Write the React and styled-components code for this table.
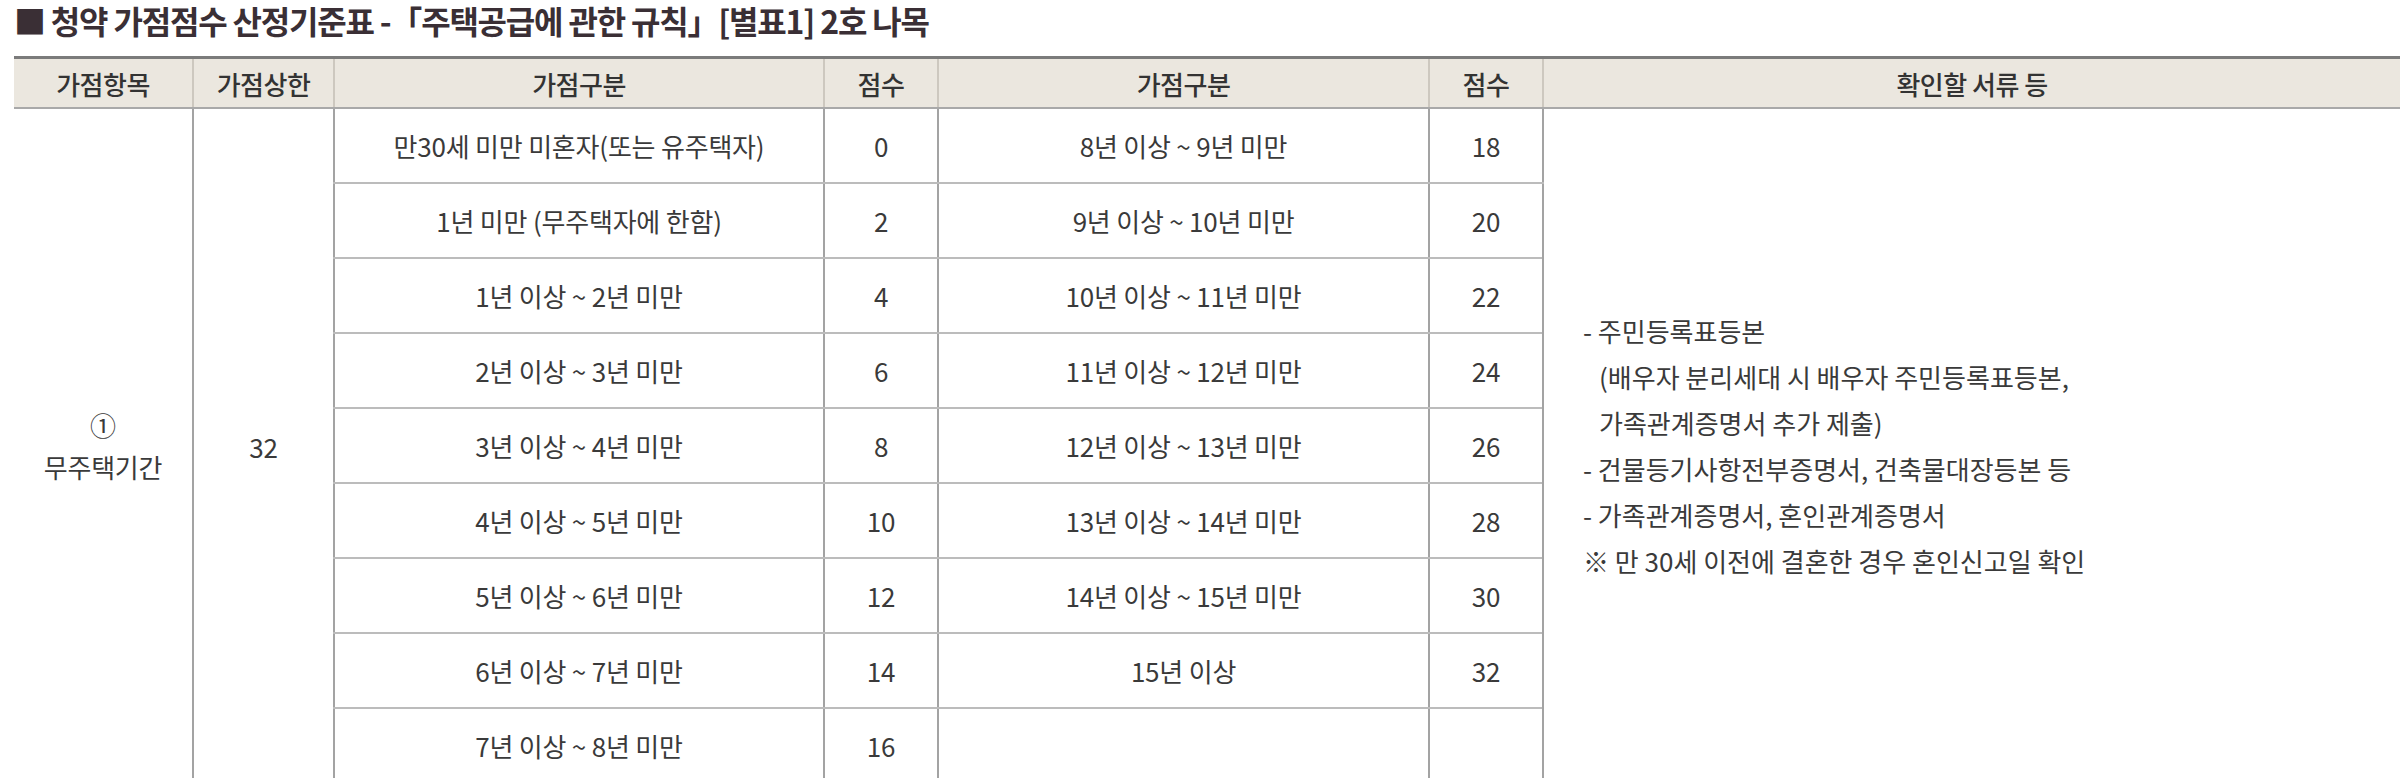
import React from "react";
import styled, { createGlobalStyle } from "styled-components";

const GlobalStyle = createGlobalStyle`
  html, body {
    margin: 0;
    padding: 0;
    background: #fff;
  }
  body {
    font-family: "Noto Sans CJK KR", "Noto Sans", sans-serif;
    color: #3c3c3c;
  }
`;

const Page = styled.div`
  padding: 0 2px 0 14px;
`;

const Title = styled.h2`
  margin: 0;
  height: 56px;
  font-size: 32px;
  line-height: 40px;
  font-weight: 700;
  letter-spacing: -1.2px;
  color: #3a2f35;
  white-space: nowrap;
`;

const Table = styled.table`
  width: 100%;
  border-collapse: collapse;
  table-layout: fixed;
`;

const Head = styled.th`
  height: 48px;
  padding: 0;
  background: #ebe7df;
  border-top: 3px solid #7b7b7b;
  border-bottom: 2px solid #a9a9a9;
  border-left: 2px solid #cdc8bf;
  font-size: 26px;
  font-weight: 500;
  letter-spacing: -0.5px;
  color: #333;
  white-space: nowrap;
  &:first-child {
    border-left: none;
  }
`;

const Cell = styled.td`
  height: 73px;
  padding: 0;
  text-align: ${(p) => p.$align || "center"};
  vertical-align: middle;
  border-left: ${(p) => (p.$first ? "none" : "2px solid #a3a3a3")};
  border-bottom: ${(p) => (p.$span ? "none" : "2px solid #bcbcbc")};
  font-size: 26px;
  font-weight: 400;
  letter-spacing: -0.2px;
  color: #3a3a3a;
  white-space: nowrap;
`;

const ItemName = styled.div`
  line-height: 42px;
`;

const Docs = styled.div`
  padding-left: 39px;
  line-height: 46px;
  letter-spacing: 0;
`;

const DocLine = styled.div`
  padding-left: ${(p) => (p.$indent ? "16px" : "0")};
`;

const leftRows = [
  ["만30세 미만 미혼자(또는 유주택자)", 0],
  ["1년 미만 (무주택자에 한함)", 2],
  ["1년 이상 ~ 2년 미만", 4],
  ["2년 이상 ~ 3년 미만", 6],
  ["3년 이상 ~ 4년 미만", 8],
  ["4년 이상 ~ 5년 미만", 10],
  ["5년 이상 ~ 6년 미만", 12],
  ["6년 이상 ~ 7년 미만", 14],
  ["7년 이상 ~ 8년 미만", 16],
];

const rightRows = [
  ["8년 이상 ~ 9년 미만", 18],
  ["9년 이상 ~ 10년 미만", 20],
  ["10년 이상 ~ 11년 미만", 22],
  ["11년 이상 ~ 12년 미만", 24],
  ["12년 이상 ~ 13년 미만", 26],
  ["13년 이상 ~ 14년 미만", 28],
  ["14년 이상 ~ 15년 미만", 30],
  ["15년 이상", 32],
  ["", ""],
];

const docs = [
  { text: "- 주민등록표등본" },
  { text: "(배우자 분리세대 시 배우자 주민등록표등본,", indent: true },
  { text: "가족관계증명서 추가 제출)", indent: true },
  { text: "- 건물등기사항전부증명서, 건축물대장등본 등" },
  { text: "- 가족관계증명서, 혼인관계증명서" },
  { text: "※ 만 30세 이전에 결혼한 경우 혼인신고일 확인" },
];

export default function App() {
  return (
    <Page>
      <GlobalStyle />
      <Title>■ 청약 가점점수 산정기준표 -「주택공급에 관한 규칙」[별표1] 2호 나목</Title>
      <Table>
        <colgroup>
          <col style={{ width: 179 }} />
          <col style={{ width: 141 }} />
          <col style={{ width: 490 }} />
          <col style={{ width: 114 }} />
          <col style={{ width: 491 }} />
          <col style={{ width: 114 }} />
          <col />
        </colgroup>
        <thead>
          <tr>
            <Head>가점항목</Head>
            <Head>가점상한</Head>
            <Head>가점구분</Head>
            <Head>점수</Head>
            <Head>가점구분</Head>
            <Head>점수</Head>
            <Head>확인할 서류 등</Head>
          </tr>
        </thead>
        <tbody>
          {leftRows.map(([label, score], i) => (
            <tr key={label}>
              {i === 0 && (
                <>
                  <Cell $first $span rowSpan={leftRows.length}>
                    <ItemName>①</ItemName>
                    <ItemName>무주택기간</ItemName>
                  </Cell>
                  <Cell $span rowSpan={leftRows.length}>
                    32
                  </Cell>
                </>
              )}
              <Cell>{label}</Cell>
              <Cell>{score}</Cell>
              <Cell>{rightRows[i][0]}</Cell>
              <Cell>{rightRows[i][1]}</Cell>
              {i === 0 && (
                <Cell $span $align="left" rowSpan={leftRows.length}>
                  <Docs>
                    {docs.map((d) => (
                      <DocLine key={d.text} $indent={d.indent}>
                        {d.text}
                      </DocLine>
                    ))}
                  </Docs>
                </Cell>
              )}
            </tr>
          ))}
        </tbody>
      </Table>
    </Page>
  );
}
